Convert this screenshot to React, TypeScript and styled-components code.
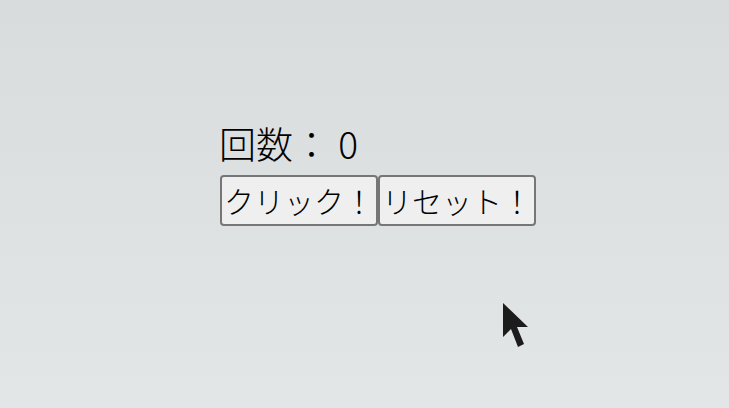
import * as React from 'react';
import { useState } from 'react';
import styled, { createGlobalStyle } from 'styled-components';

const GlobalStyle = createGlobalStyle`
  html, body {
    margin: 0;
    padding: 0;
    height: 100%;
  }
  body {
    background: linear-gradient(to bottom, #d8dcdd 0%, #e2e6e7 100%);
    font-family: "Noto Sans CJK JP", "Noto Sans", sans-serif;
    color: #000;
  }
`;

const Page = styled.div`
  position: relative;
  width: 729px;
  height: 408px;
  overflow: hidden;
  box-sizing: border-box;
  padding: 118px 0 0 220px;
`;

const Counter = styled.div`
  display: flex;
  flex-direction: column;
  align-items: flex-start;
  gap: 6px;
`;

const Count = styled.div`
  font-size: 37px;
  font-weight: 300;
  line-height: 51px;
  margin-left: -1px;
`;

const Buttons = styled.div`
  display: flex;
  gap: 0;
`;

const Button = styled.button`
  font-family: inherit;
  font-size: 30px;
  font-weight: 300;
  line-height: 45px;
  padding: 1px 2px;
  border: 2px solid #767676;
  border-radius: 4px;
  background: #efefef;
  color: #000;
  cursor: pointer;
`;

const Pointer = styled.svg`
  position: absolute;
  left: 502px;
  top: 302px;
`;

export default function App() {
  const [count, setCount] = useState(0);
  return (
    <Page>
      <GlobalStyle />
      <Counter>
        <Count>回数： {count}</Count>
        <Buttons>
          <Button onClick={() => setCount(count + 1)}>クリック！</Button>
          <Button onClick={() => setCount(0)}>リセット！</Button>
        </Buttons>
      </Counter>
      <Pointer width="28" height="48" viewBox="0 0 28 48">
        <path d="M1 1 L1 35 L9 27 L16 45 L22 42 L15 25 L26 25 Z" fill="#1c1c1c" />
      </Pointer>
    </Page>
  );
}
